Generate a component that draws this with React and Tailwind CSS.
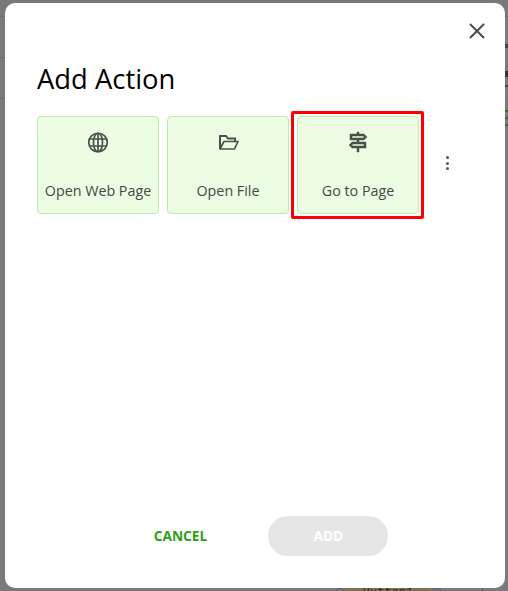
import React from 'react';
import { X } from 'lucide-react';

const Globe = () => (
  <svg width="24" height="24" viewBox="0 0 24 24" fill="none" stroke="#47534a" strokeWidth="1.7">
    <circle cx="12" cy="12.5" r="9.25" />
    <ellipse cx="12" cy="12.5" rx="4.5" ry="9.25" />
    <path d="M12 3v19M3.5 9h17M3.5 16h17" />
  </svg>
);

const Folder = () => (
  <svg width="24" height="24" viewBox="0 0 24 24" fill="none" stroke="#47534a" strokeWidth="2">
    <path d="M4 19V6h6l2 2.5h7V11" />
    <path d="M4 19h14.5L22 11.5H8L4 19z" strokeWidth="1.7" strokeLinejoin="round" />
  </svg>
);

const Signpost = () => (
  <svg width="24" height="24" viewBox="0 0 24 24" fill="#47534a" stroke="#47534a" strokeWidth="0.5">
    <path d="M13 10h5l3-3-3-3h-5V2h-2v2H4v6h7v2H6l-3 3 3 3h5v4h2v-4h7v-6h-7v-2zM6 6h11.17l1 1-1 1H6V6zm12 8v2H6.83l-1-1 1-1H18z" />
  </svg>
);

const ActionCard = ({ icon, label }) => (
  <div className="w-[122px] h-[98px] flex flex-col items-center bg-[#ecfde4] border border-[#bdebb0] rounded-[4px] text-[#414b44]">
    <div className="mt-[13px] h-[24px]">{icon}</div>
    <div className="mt-[27px] text-[14.3px] leading-[20px] whitespace-nowrap">{label}</div>
  </div>
);

// the page behind the dimmed overlay only shows in these thin strips
const LeftStrip = () => (
  <div className="w-[5px] shrink-0 flex flex-col pt-[13px] gap-[40px]">
    <div className="h-px bg-[#6d6d6d]" />
    <div className="h-px bg-[#6d6d6d]" />
    <div className="h-px bg-[#6d6d6d]" />
  </div>
);

const RightStrip = () => (
  <div className="w-[3px] shrink-0 flex flex-col pt-[13px]">
    <div className="h-px bg-[#6d6d6d]" />
    <div className="mt-[27px] h-[4px] bg-[#444]" />
    <div className="mt-[23px] h-[6px] bg-[#333]" />
    <div className="mt-[8px] h-[2px] bg-[#444]" />
    <div className="mt-[23px] h-[2px] bg-[#3f6b32]" />
    <div className="mt-[5px] h-[2px] bg-[#3f6b32]" />
    <div className="mt-[5px] h-[2px] bg-[#3f6b32]" />
  </div>
);

const BottomStrip = () => (
  <div className="h-[3px] flex items-start pl-[335px] overflow-hidden">
    <div className="w-[10px] h-[10px] shrink-0 rounded-full border border-[#5d4f78]" />
    <div className="w-[86px] h-[3px] shrink-0 bg-[#7f7253] text-[#2c2c2c] font-['Liberation_Mono',monospace] text-[12px] leading-[10px] text-center overflow-hidden whitespace-nowrap">
      Button1
    </div>
    <div className="ml-[1px] w-[10px] h-[10px] shrink-0 rounded-full border border-[#5d4f78]" />
    <div className="ml-[40px] w-px h-[3px] shrink-0 bg-[#555]" />
  </div>
);

export default function App() {
  return (
    <div className="w-[508px] h-[591px] bg-[#7a7a7a] pt-[3px] flex flex-col overflow-hidden font-['Open_Sans','Noto_Sans',sans-serif]">
      <div className="flex h-[585px]">
        <LeftStrip />
        <div className="w-[500px] bg-white rounded-[10px] flex flex-col pt-[15px]">
          <div className="flex justify-end pr-[15px]">
            <button className="text-[#4f4f4f]">
              <X size={26} strokeWidth={1.9} />
            </button>
          </div>
          <div className="flex-1 flex flex-col px-[32px]">
            <h1 className="mt-[15px] text-[27.4px] leading-[40px] text-black">Add Action</h1>
            <div className="mt-[17px] flex items-start gap-[8px]">
              <ActionCard icon={<Globe />} label="Open Web Page" />
              <ActionCard icon={<Folder />} label="Open File" />
              <div className="relative">
                <ActionCard icon={<Signpost />} label="Go to Page" />
                <div className="absolute -left-[6px] -right-[5px] -top-[5px] -bottom-[5px] border-[3px] border-[#ff0000] rounded-[2px]" />
              </div>
              <div className="ml-[19px] mt-[40px] flex flex-col gap-[2.5px]">
                <span className="w-[3px] h-[3px] rounded-full bg-[#555]" />
                <span className="w-[3px] h-[3px] rounded-full bg-[#555]" />
                <span className="w-[3px] h-[3px] rounded-full bg-[#555]" />
              </div>
            </div>
            <div className="mt-auto mb-[32px] pl-[32px] flex items-center justify-center gap-[61px] text-[13.75px] font-bold">
              <button className="text-[#2f9f12]">CANCEL</button>
              <button className="w-[120px] h-[40px] rounded-[20px] bg-[#e6e6e6] text-white">ADD</button>
            </div>
          </div>
        </div>
        <RightStrip />
      </div>
      <BottomStrip />
    </div>
  );
}
